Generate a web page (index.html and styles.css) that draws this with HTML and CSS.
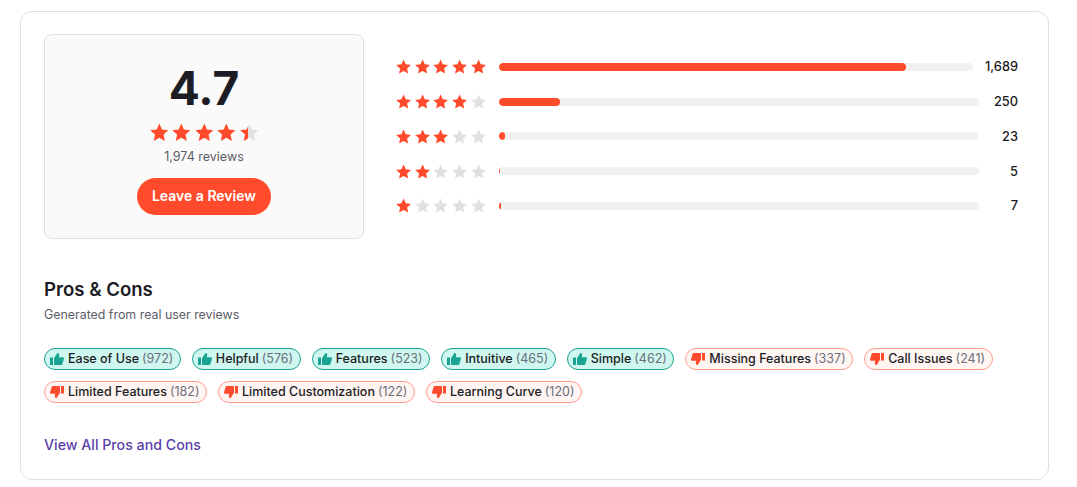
FILE: index.html
```html
<!DOCTYPE html>
<html lang="en">
<head>
<meta charset="utf-8">
<title>Reviews</title>
<link rel="stylesheet" href="styles.css">
</head>
<body>
<svg class="defs" width="0" height="0" aria-hidden="true">
  <defs>
    <symbol id="star" viewBox="0 0 24 24"><path d="M12 .8l3.4 7.6 8.3.9-6.2 5.6 1.7 8.2L12 18.9l-7.2 4.2 1.7-8.2L.3 9.3l8.3-.9z"/></symbol>
    <symbol id="up" viewBox="0 0 14 12"><path d="M0 4.6h3V12H0zM4 5.2L7.4 0c1.1 0 1.9.9 1.8 2L8.8 4.2H13c.7 0 1.1.6 1 1.2l-1.6 5.6c-.2.6-.7 1-1.3 1H5c-.6 0-1-.4-1-1z"/></symbol>
    <symbol id="down" viewBox="0 0 14 12"><path d="M14 7.4h-3V0h3zM10 6.8L6.6 12c-1.1 0-1.9-.9-1.8-2l.4-2.2H1c-.7 0-1.1-.6-1-1.2L1.6 1c.2-.6.7-1 1.3-1H9c.6 0 1 .4 1 1z"/></symbol>
  </defs>
</svg>
<main class="card">
  <section class="top">
    <div class="summary">
      <div class="score">4.7</div>
      <div class="stars stars-lg">
        <svg class="star on"><use href="#star"/></svg>
        <svg class="star on"><use href="#star"/></svg>
        <svg class="star on"><use href="#star"/></svg>
        <svg class="star on"><use href="#star"/></svg>
        <span class="half"><svg class="star off"><use href="#star"/></svg><span class="half-fill"><svg class="star on"><use href="#star"/></svg></span></span>
      </div>
      <div class="count">1,974 reviews</div>
      <button class="cta">Leave a Review</button>
    </div>
    <div class="rows">
      <div class="row">
        <div class="stars"><svg class="star on"><use href="#star"/></svg><svg class="star on"><use href="#star"/></svg><svg class="star on"><use href="#star"/></svg><svg class="star on"><use href="#star"/></svg><svg class="star on"><use href="#star"/></svg></div>
        <div class="track"><div class="fill" style="width:85.8%"></div></div>
        <div class="num">1,689</div>
      </div>
      <div class="row">
        <div class="stars"><svg class="star on"><use href="#star"/></svg><svg class="star on"><use href="#star"/></svg><svg class="star on"><use href="#star"/></svg><svg class="star on"><use href="#star"/></svg><svg class="star off"><use href="#star"/></svg></div>
        <div class="track"><div class="fill" style="width:12.7%"></div></div>
        <div class="num">250</div>
      </div>
      <div class="row">
        <div class="stars"><svg class="star on"><use href="#star"/></svg><svg class="star on"><use href="#star"/></svg><svg class="star on"><use href="#star"/></svg><svg class="star off"><use href="#star"/></svg><svg class="star off"><use href="#star"/></svg></div>
        <div class="track"><div class="fill" style="width:1.2%"></div></div>
        <div class="num">23</div>
      </div>
      <div class="row">
        <div class="stars"><svg class="star on"><use href="#star"/></svg><svg class="star on"><use href="#star"/></svg><svg class="star off"><use href="#star"/></svg><svg class="star off"><use href="#star"/></svg><svg class="star off"><use href="#star"/></svg></div>
        <div class="track"><div class="fill" style="width:0.25%"></div></div>
        <div class="num">5</div>
      </div>
      <div class="row">
        <div class="stars"><svg class="star on"><use href="#star"/></svg><svg class="star off"><use href="#star"/></svg><svg class="star off"><use href="#star"/></svg><svg class="star off"><use href="#star"/></svg><svg class="star off"><use href="#star"/></svg></div>
        <div class="track"><div class="fill" style="width:0.35%"></div></div>
        <div class="num">7</div>
      </div>
    </div>
  </section>
  <section class="pros">
    <h2 class="title">Pros &amp; Cons</h2>
    <p class="sub">Generated from real user reviews</p>
    <div class="chips">
      <span class="chip pro"><svg class="thumb"><use href="#up"/></svg><span class="label">Ease of Use</span><span class="n">(972)</span></span>
      <span class="chip pro"><svg class="thumb"><use href="#up"/></svg><span class="label">Helpful</span><span class="n">(576)</span></span>
      <span class="chip pro"><svg class="thumb"><use href="#up"/></svg><span class="label">Features</span><span class="n">(523)</span></span>
      <span class="chip pro"><svg class="thumb"><use href="#up"/></svg><span class="label">Intuitive</span><span class="n">(465)</span></span>
      <span class="chip pro"><svg class="thumb"><use href="#up"/></svg><span class="label">Simple</span><span class="n">(462)</span></span>
      <span class="chip con"><svg class="thumb"><use href="#down"/></svg><span class="label">Missing Features</span><span class="n">(337)</span></span>
      <span class="chip con"><svg class="thumb"><use href="#down"/></svg><span class="label">Call Issues</span><span class="n">(241)</span></span>
      <span class="chip con"><svg class="thumb"><use href="#down"/></svg><span class="label">Limited Features</span><span class="n">(182)</span></span>
      <span class="chip con"><svg class="thumb"><use href="#down"/></svg><span class="label">Limited Customization</span><span class="n">(122)</span></span>
      <span class="chip con"><svg class="thumb"><use href="#down"/></svg><span class="label">Learning Curve</span><span class="n">(120)</span></span>
    </div>
    <a class="link" href="#">View All Pros and Cons</a>
  </section>
</main>
</body>
</html>
```
FILE: styles.css
```css
* { box-sizing: border-box; }
html, body { margin: 0; background: #fff; }
body {
  padding: 11px 28px 0 20px;
  font-family: "Inter", "Noto Sans", sans-serif;
  color: #1c1c24;
  overflow: hidden;
}
.defs { position: absolute; }
.card {
  width: 1029px;
  height: 469px;
  border: 1px solid #e0e0e2;
  border-radius: 12px;
  padding: 22px 30px 0 23px;
}
.top { display: flex; gap: 32px; height: 205px; }
.summary {
  width: 320px;
  height: 205px;
  flex: none;
  background: #fafafa;
  border: 1px solid #e0e0e2;
  border-radius: 8px;
  display: flex;
  flex-direction: column;
  align-items: center;
  padding-top: 25px;
}
.score { font-size: 46px; line-height: 56px; font-weight: 700; color: #1c1c24; }
.stars { display: flex; gap: 3.55px; flex: none; }
.star { width: 15.2px; height: 15.2px; display: block; flex: none; }
.on { fill: #ff4b2b; }
.off { fill: #e0e0e2; }
.stars-lg { gap: 3.9px; margin-top: 6.5px; }
.stars-lg .star { width: 18.6px; height: 18.6px; }
.half { position: relative; display: block; width: 18.6px; height: 18.6px; }
.half-fill { position: absolute; left: 0; top: 0; width: 8.5px; height: 18.6px; overflow: hidden; }
.count { font-size: 12.5px; line-height: 18px; color: #5c5c66; margin-top: 6.5px; }
.cta {
  margin-top: 12px;
  width: 134px;
  height: 37px;
  border: 0;
  border-radius: 19px;
  background: #ff4b2b;
  color: #fff;
  font: 600 14px "Inter", sans-serif;
  padding: 0 0 1px;
}
.rows { flex: 1; display: flex; flex-direction: column; padding-top: 15.5px; }
.row { display: flex; align-items: center; height: 34.75px; flex: none; }
.row .stars { width: 103px; }
.track { flex: 1; height: 8px; background: #f1f1f2; border-radius: 4px; overflow: hidden; }
.fill { height: 100%; background: #ff4b2b; border-radius: 4px; }
.num { min-width: 27px; margin-left: 12px; text-align: right; font-size: 12.8px; font-weight: 500; color: #1c1c24; }
.pros { padding-top: 38px; }
.title { margin: 0; font-size: 18.6px; line-height: 24px; font-weight: 600; }
.sub { margin: 4px 0 0; font-size: 12.4px; line-height: 20px; color: #5c5c66; }
.chips { display: flex; flex-wrap: wrap; gap: 11px; margin-top: 23px; }
.chip {
  display: inline-flex;
  align-items: center;
  height: 22px;
  padding: 0 6.5px 1px 5px;
  border: 1px solid;
  border-radius: 11px;
  font-size: 12.5px;
  font-weight: 500;
  white-space: nowrap;
}
.pro { background: #cff6ef; border-color: #1aa592; }
.con { background: #fff5f3; border-color: #ff9d8c; }
.thumb { width: 14px; height: 12px; margin-right: 4px; flex: none; }
.pro .thumb { fill: #1aa592; }
.con .thumb { fill: #ff4b2b; }
.n { margin-left: 3px; color: #6b6f7c; font-weight: 400; }
.link { display: block; margin-top: 32px; font-size: 14.2px; line-height: 20px; font-weight: 500; color: #5a3ea8; text-decoration: none; }
```
